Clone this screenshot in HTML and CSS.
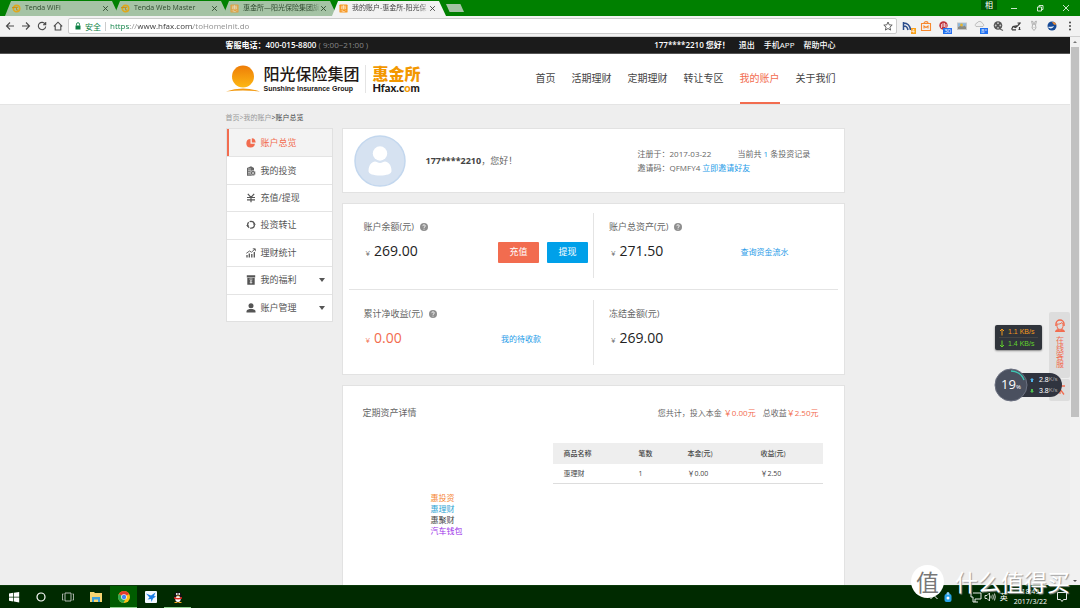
FILE: index.html
```html
<!DOCTYPE html>
<html lang="zh-CN">
<head>
<meta charset="utf-8">
<title>我的账户-惠金所-阳光保险集团</title>
<link rel="stylesheet" href="styles.css">
</head>
<body>
<svg class="defs" aria-hidden="true">
  <symbol id="tenda" viewBox="0 0 10 10"><circle cx="5" cy="5" r="3.6" fill="none" stroke="#e0a81c" stroke-width="1.8"/><path d="M0 4h4M3.2 3.6h3.6M5 3.6v3h1.6" stroke="#c98f10" stroke-width="1.1" fill="none"/></symbol>
  <symbol id="hui" viewBox="0 0 10 10"><rect x=".5" y=".5" width="9" height="9" rx="1" fill="#f7951d"/><path d="M2 2.4h6M5 1.3v4.4M2.6 3.6h4.8v1.8H2.6zM2.4 7v1.2M4 6.9v1.4h2.4M7.6 7v1" stroke="#fff3df" stroke-width=".7" fill="none"/></symbol>
  <symbol id="x" viewBox="0 0 6 6"><path d="M1 1l4 4M5 1L1 5" stroke="currentColor" stroke-width=".8" fill="none"/></symbol>
  <symbol id="help" viewBox="0 0 8 8"><circle cx="4" cy="4" r="4" fill="#8f8f8f"/><path d="M2.800 3.100c0-1.700 2.500-1.600 2.500-.1C5.300 3.900 4 3.900 4 4.900M4 5.700v.9" stroke="#fff" stroke-width=".9" fill="none"/></symbol>
</svg>

<header class="chrome">
  <div class="tabs">
    <div class="tab"><svg class="fav"><use href="#tenda"/></svg><span class="tab-title">Tenda WiFi</span><button class="tab-x" aria-label="关闭"><svg><use href="#x"/></svg></button></div>
    <div class="tab"><svg class="fav"><use href="#tenda"/></svg><span class="tab-title">Tenda Web Master</span><button class="tab-x" aria-label="关闭"><svg><use href="#x"/></svg></button></div>
    <div class="tab"><svg class="fav dim"><use href="#hui"/></svg><span class="tab-title">惠金所—阳光保险集团旗</span><button class="tab-x" aria-label="关闭"><svg><use href="#x"/></svg></button></div>
    <div class="tab active"><svg class="fav"><use href="#hui"/></svg><span class="tab-title">我的账户-惠金所-阳光保</span><button class="tab-x" aria-label="关闭"><svg><use href="#x"/></svg></button></div>
    <button class="new-tab" aria-label="新标签页"></button>
    <div class="win">
      <span class="ime">相</span>
      <button aria-label="最小化"><svg viewBox="0 0 8 8"><path d="M1 4.500h6" stroke="#fff" stroke-width=".8"/></svg></button>
      <button aria-label="还原"><svg viewBox="0 0 8 8"><path d="M1.500 3h4v4h-4zM3 3V1.500h4v4H5.500" stroke="#fff" stroke-width=".8" fill="none"/></svg></button>
      <button aria-label="关闭"><svg viewBox="0 0 8 8"><path d="M1 1l6 6M7 1L1 7" stroke="#fff" stroke-width=".8"/></svg></button>
    </div>
  </div>
  <div class="toolbar">
    <div class="nav-btns">
      <button aria-label="后退"><svg viewBox="0 0 10 10"><path d="M9 5H1.500M5 1.500L1.500 5 5 8.500" class="ln"/></svg></button>
      <button aria-label="前进"><svg viewBox="0 0 10 10"><path d="M1 5h7.500M5 1.500L8.500 5 5 8.500" class="ln"/></svg></button>
      <button aria-label="刷新"><svg viewBox="0 0 10 10"><path d="M8.300 3.300A3.700 3.700 0 1 0 8.700 5.500M8.700 1v2.700H6" class="ln"/></svg></button>
      <button aria-label="主页"><svg viewBox="0 0 10 10"><path d="M.8 5.300L5 1.200l4.200 4.100M2.200 4.500V9h5.600V4.500" class="ln"/></svg></button>
    </div>
    <div class="omnibox">
      <svg class="lock" viewBox="0 0 6 8"><path d="M.5 3.500h5V7.500h-5z" fill="#0b8043"/><path d="M1.500 3.500V2.200a1.500 1.500 0 0 1 3 0v1.300" stroke="#0b8043" fill="none" stroke-width=".9"/></svg>
      <label class="safe" for="url">安全</label>
      <input id="url" class="url" type="text" value="https://www.hfax.com/toHomeInit.do">
      <button aria-label="收藏"><svg class="star" viewBox="0 0 10 10"><path d="M5 1l1.200 2.800 3 .3-2.300 2 .7 3L5 7.500 2.400 9.100l.7-3-2.300-2 3-.3z" stroke="#555" fill="none" stroke-width=".9"/></svg></button>
    </div>
    <div class="exts">
      <button aria-label="RSS"><svg viewBox="0 0 12 12"><path d="M1.500 10V2M1.500 3c4 0 6.500 3 7 7M2 6c2 0 3.500 1.500 4 4" stroke="#2b4d8c" stroke-width="1.500" fill="none"/></svg><span class="badge amber">4</span></button>
      <button aria-label="小米"><svg viewBox="0 0 12 12"><path d="M1.500 3.500h9v7h-9zM4 3.500c0-2.500 4-2.500 4 0M4 8.500V6l2 1.500L8 6v2.500" stroke="#f7882c" stroke-width="1.100" fill="none"/></svg></button>
      <button aria-label="广告拦截"><svg viewBox="0 0 12 12"><circle cx="5.500" cy="5.500" r="4.200" fill="#c0343c"/><path d="M3.500 8V4M5 7V3M6.500 7V3M8 8V4" stroke="#fff" stroke-width=".7"/></svg><span class="badge blue">30</span></button>
      <button aria-label="图片"><svg viewBox="0 0 12 12"><path d="M1 2.500h10v7.500H1z" fill="#c6c6c6"/><path d="M2 3.300h8v3.200H2z" fill="#8cb8dd"/><path d="M2 7l3-1.500 2 1L8.500 5.500 10 7v2H2z" fill="#8a8a80"/><circle cx="5.500" cy="5" r="1.400" fill="#e9b52c"/></svg></button>
      <button aria-label="天气"><svg viewBox="0 0 12 12"><path d="M2 6.500a2 2 0 0 1 1-3.500 3 3 0 0 1 5.500.5 1.700 1.700 0 0 1 .5 3z" fill="#eee" stroke="#aaa" stroke-width=".7"/></svg><span class="badge blue">8°</span></button>
      <button aria-label="影音"><svg viewBox="0 0 12 12"><circle cx="6" cy="5.500" r="4.300" fill="#555"/><path d="M8 9l3 1.500" stroke="#666" stroke-width="1.200"/><g fill="#ccc"><circle cx="6" cy="3.200" r=".9"/><circle cx="6" cy="7.800" r=".9"/><circle cx="3.700" cy="5.500" r=".9"/><circle cx="8.300" cy="5.500" r=".9"/></g></svg></button>
      <button aria-label="链接"><svg viewBox="0 0 12 12"><path d="M1.500 9.500L3 6.500l5-1 2.500-3M7.500 3h3M2 9.800h4M8.500 9.500h2M9.500 7v2.500M3 6.500l2.500 1 2-1.500" stroke="#3c3c3c" stroke-width="1.200" fill="none"/></svg></button>
      <button aria-label="兔子"><svg viewBox="0 0 12 12"><path d="M4.500 5L3.500 1.200 5 1.500l.5 3h1l.5-3 1.500-.3L7.500 5l.5 3-2 2.500L4 8zM5.200 7v.6M6.800 7v.6" stroke="#aaa" stroke-width=".9" fill="none"/></svg></button>
      <button aria-label="浏览"><svg viewBox="0 0 12 12"><circle cx="6" cy="6" r="4.500" fill="#174a96"/><path d="M2 7c1.500-1 3 .5 6-1-1 2.500-4 3.500-6 1z" fill="#e7f0fa"/><path d="M6 2c2-.5 4 1 4.300 2.500L8 4.800z" fill="#f0892c"/></svg></button>
      <button aria-label="菜单"><svg viewBox="0 0 12 12"><g fill="#444"><circle cx="6" cy="2.500" r="1"/><circle cx="6" cy="6" r="1"/><circle cx="6" cy="9.500" r="1"/></g></svg></button>
    </div>
  </div>
</header>

<div class="viewport">
  <div class="page">
    <div class="topbar"><div class="wrap">
      <p><b>客服电话：400-015-8800</b> <span>( 9:00~21:00 )</span></p>
      <div class="top-links"><b>177****2210 您好！</b><a href="#">退出</a><a href="#">手机APP</a><a href="#">帮助中心</a></div>
    </div></div>
    <div class="masthead"><div class="wrap">
      <div class="brand">
        <svg class="sun" viewBox="0 0 34 28"><defs><linearGradient id="sg" x2="0" y2="1"><stop stop-color="#ee7d08"/><stop offset="1" stop-color="#fdb813"/></linearGradient></defs><circle cx="17" cy="11.500" r="11" fill="url(#sg)"/><path d="M0 26.500Q17 20.500 34 26.500 17 24.500 0 26.500z" fill="#f39a10"/></svg>
        <div class="brand-a"><strong>阳光保险集团</strong><span>Sunshine Insurance Group</span></div>
        <div class="brand-b"><strong>惠金所</strong><span>Hfax.c<i>o</i>m</span></div>
      </div>
      <nav class="main-nav"><a href="#">首页</a><a href="#">活期理财</a><a href="#">定期理财</a><a href="#">转让专区</a><a href="#" class="on">我的账户</a><a href="#">关于我们</a></nav>
    </div></div>
    <div class="wrap crumbs"><p>首页&gt;我的账户<b>&gt;账户总览</b></p></div>
    <div class="wrap columns">
      <nav class="side">
        <a href="#" class="on"><svg viewBox="0 0 10 10"><path d="M4.500 1a4.300 4.300 0 1 0 4.400 4.800H4.500z" fill="#f26c4f"/><path d="M5.800.3a4.200 4.200 0 0 1 3.900 4.200H5.800z" fill="#f26c4f"/></svg>账户总览</a>
        <a href="#"><svg viewBox="0 0 10 10"><path d="M1 2L5 .3 8 2v7.700H1z" fill="#666"/><path d="M2 3h3M2 4.700h3M2 6.400h2M2 8h2" stroke="#fff" stroke-width=".6"/><circle cx="7" cy="7" r="2.600" fill="#666" stroke="#fff" stroke-width=".5"/><path d="M6 5.800l1 1.200 1-1.200M7 7v1.500M6 7.400h2" stroke="#fff" stroke-width=".5" fill="none"/></svg>我的投资</a>
        <a href="#"><svg viewBox="0 0 10 10"><path d="M1.800.8L5 4.300 8.200.8M5 4.300v5M1 4.500h8M1 6.800h8" stroke="#555" stroke-width="1.200" fill="none"/></svg>充值/提现</a>
        <a href="#"><svg viewBox="0 0 10 10"><circle cx="5" cy="4.800" r="3.400" stroke="#555" stroke-width="1.300" fill="none" stroke-dasharray="6.100 1"/><path d="M.2 5h2.600L1.500 7zM7.200 4.800h2.600L8.500 2.800z" fill="#555"/></svg>投资转让</a>
        <a href="#"><svg viewBox="0 0 10 10"><path d="M1 9.500V7M3.300 9.500V5.500M5.800 9.500V6M8.300 9.500V4" stroke="#555" stroke-width="1.300"/><path d="M.3 5.300L3.500 3l2 1.200L9 1M6.800.8h2.500v2.400" stroke="#555" stroke-width=".9" fill="none"/></svg>理财统计</a>
        <a href="#"><svg viewBox="0 0 10 10"><path d="M.8.3h8.400v2.200H.8zM1.300 3.100h7.400v6.600H1.300z" fill="#555"/><path d="M3.500 4h3M3.800 5l1.200 1.200L6.200 5M5 6v2.700M3.700 7.300h2.600" stroke="#fff" stroke-width=".7" fill="none"/></svg>我的福利<i class="caret"></i></a>
        <a href="#"><svg viewBox="0 0 10 10"><circle cx="5" cy="2.800" r="2.500" fill="#555"/><path d="M.5 9.500V8C1 6.500 3 6 5 6s4 .5 4.500 2v1.500z" fill="#555"/></svg>账户管理<i class="caret"></i></a>
      </nav>
      <main class="main">
        <section class="card profile">
          <svg class="avatar" viewBox="0 0 52 52"><circle cx="26" cy="26" r="25" fill="#d6e2f1" stroke="#c3d7ee" stroke-width="1.500"/><circle cx="26" cy="18.500" r="7.200" fill="#fff"/><path d="M14.500 36c0-6 3.500-9.500 6.500-9.500 1.500 0 3 1.500 5 1.500s3.500-1.500 5-1.500c3 0 6.500 3.500 6.500 9.500 0 3-5 4.500-11.500 4.500S14.500 39 14.500 36z" fill="#fff"/></svg>
          <p class="hello"><b>177****2210</b>，您好！</p>
          <div class="meta">
            <p><span class="reg">注册于：2017-03-22</span>当前共 <em>1</em> 条投资记录</p>
            <p>邀请码：QFMFY4 <a href="#">立即邀请好友</a></p>
          </div>
        </section>
        <section class="card balances">
          <div class="cell"><h3>账户余额(元)<svg><use href="#help"/></svg></h3><div class="line"><p class="amt"><small>¥</small>269.00</p><div class="act"><button class="btn red">充值</button><button class="btn sky">提现</button></div></div></div>
          <div class="cell split"><h3>账户总资产(元)<svg><use href="#help"/></svg></h3><div class="line"><p class="amt"><small>¥</small>271.50</p><div class="act"><a href="#">查询资金流水</a></div></div></div>
          <hr>
          <div class="cell"><h3>累计净收益(元)<svg><use href="#help"/></svg></h3><div class="line"><p class="amt hot"><small>¥</small>0.00</p><div class="act"><a href="#">我的待收款</a></div></div></div>
          <div class="cell split"><h3>冻结金额(元)</h3><div class="line"><p class="amt"><small>¥</small>269.00</p></div></div>
        </section>
        <section class="card detail">
          <div class="detail-head"><h3>定期资产详情</h3><p>您共计，投入本金 <em>￥0.00元</em><span class="gain">总收益<em>￥2.50元</em></span></p></div>
          <div class="detail-body">
            <ul class="legend"><li class="l1">惠投资</li><li class="l2">惠理财</li><li class="l3">惠聚财</li><li class="l4">汽车钱包</li></ul>
            <table>
              <thead><tr><th class="c1">商品名称</th><th class="c2">笔数</th><th class="c3">本金(元)</th><th>收益(元)</th></tr></thead>
              <tbody><tr><td>惠理财</td><td>1</td><td>￥0.00</td><td>￥2.50</td></tr></tbody>
            </table>
          </div>
        </section>
      </main>
    </div>
  </div>
  <div class="scrollbar"><i class="up"></i><div class="thumb"></div><i class="down"></i></div>

  <aside class="service">
    <a href="#" class="chat"><svg viewBox="0 0 12 14"><path d="M2 7V5a4 4 0 0 1 8 0v2" stroke="#f26c4f" stroke-width="1.500" fill="none"/><path d="M3 5c2 .5 4-.5 5-1.500L9 5v2.500a3 3 0 0 1-6 0z" fill="none" stroke="#f26c4f"/><path d="M1 13c0-2 2-3 3.500-3L6 11.500 7.500 10C9 10 11 11 11 13z" fill="#f26c4f"/></svg><span>在线客服</span></a>
    <a href="#" class="top" aria-label="返回顶部"><svg viewBox="0 0 10 10"><path d="M0 1h10M1 9.500L5 4l4 5.500M5 4v5" stroke="#f26c4f" stroke-width="1.300" fill="none"/></svg></a>
  </aside>
  <div class="netmeter"><p class="upl"><svg viewBox="0 0 6 8"><path d="M3 7.500V1M1 3l2-2 2 2" stroke="currentColor" fill="none"/></svg>1.1 KB/s</p><p class="dnl"><svg viewBox="0 0 6 8"><path d="M3 .5V7M1 5l2 2 2-2" stroke="currentColor" fill="none"/></svg>1.4 KB/s</p></div>
  <div class="orb">
    <div class="ball"><svg viewBox="0 0 34 34"><circle cx="17" cy="17" r="16" fill="#4a505f" stroke="#6b7080"/><path d="M17 3a14 14 0 0 1 13 9" stroke="#3fc7b4" stroke-width="1.500" fill="none"/></svg><span>19<small>%</small></span></div>
    <div class="rates"><p><svg class="b" viewBox="0 0 4 4"><path d="M2 0l2 2H3v2H1V2H0z" fill="currentColor"/></svg>2.8<small>K/s</small></p><p><svg class="g" viewBox="0 0 4 4"><path d="M2 4l2-2H3V0H1v2H0z" fill="currentColor"/></svg>3.8<small>K/s</small></p></div>
  </div>
</div>

<footer class="taskbar">
  <button aria-label="开始"><svg viewBox="0 0 12 12"><path d="M1 2.500l4.300-.7v4H1zM6 1.700l5.200-.8v4.900H6zM1 6.500h4.300v4L1 9.800zM6 6.500h5.200v5L6 10.600z" fill="#fff"/></svg></button>
  <button aria-label="小娜"><svg viewBox="0 0 12 12"><circle cx="6" cy="6" r="4" fill="none" stroke="#fff" stroke-width="1.200"/></svg></button>
  <button aria-label="任务视图"><svg viewBox="0 0 12 12"><path d="M3 2h6v8H3zM1.500 3H.4v6h1.100M10.500 3h1.100v6h-1.100" fill="none" stroke="#ddd" stroke-width=".8"/></svg></button>
  <button class="wide" aria-label="文件资源管理器"><svg viewBox="0 0 12 12"><path d="M0 1h4l1 1h7v9H0z" fill="#f6d472"/><path d="M2 6h8v5H8V8.500H4V11H2z" fill="#3ea0dc"/></svg></button>
  <button class="run" aria-label="Chrome"><svg viewBox="0 0 12 12"><circle cx="6" cy="6" r="6" fill="#fbc116"/><path d="M6 6L.8 3A6 6 0 0 1 11.200 3z" fill="#e33b2e"/><path d="M6 6L.8 3A6 6 0 0 0 5.500 12L8 7z" fill="#2da94f"/><circle cx="6" cy="6" r="2.800" fill="#fff"/><circle cx="6" cy="6" r="2.200" fill="#4285f4"/></svg></button>
  <button aria-label="迅雷"><svg viewBox="0 0 12 12"><rect width="12" height="12" rx="1" fill="#f3f8ff"/><path d="M1 2.500l5 2L10.500 1.500 9 5l2 .5L8 7.500 6.500 11 6 8 2.500 8.500l2-2z" fill="#1c7fe6"/></svg></button>
  <button class="open" aria-label="QQ"><svg viewBox="0 0 12 12"><ellipse cx="6" cy="6" rx="4" ry="5.500" fill="#111"/><ellipse cx="6" cy="8" rx="2.700" ry="3" fill="#fff"/><path d="M2 6q4 2 8 0v1.500q-4 2-8 0z" fill="#e3261d"/><circle cx="4.800" cy="3" r=".9" fill="#fff"/><circle cx="7.200" cy="3" r=".9" fill="#fff"/><path d="M4 4.500h4L6 5.500zM2.500 11h3v1h-3zM6.500 11h3v1h-3z" fill="#f5a81c"/></svg></button>
  <div class="tray">
    <svg viewBox="0 0 12 12"><path d="M2.500 8L6 4.500 9.500 8" stroke="#fff" fill="none"/></svg>
    <svg viewBox="0 0 12 12"><rect x="2.500" y="3" width="7" height="8" rx="2" fill="#27a3e8"/><circle cx="6" cy="2.500" r="1.500" fill="#88cff5"/><circle cx="6" cy="7" r="1.500" fill="#fff"/></svg>
    <svg class="net" viewBox="0 0 12 12"><path d="M3 2h8v6H5M1 2v4h2v5h5M5 8v3" stroke="#fff" stroke-width=".9" fill="none"/></svg>
    <svg viewBox="0 0 12 12"><path d="M1 4.500h2L5.500 2v8L3 7.500H1zM7 4.500v3M8.800 3.500q1 2.500 0 5M10.500 2.500q1.500 3.500 0 7" stroke="#fff" stroke-width=".8" fill="none"/></svg>
    <span class="lang">英</span>
    <p class="clock">18:49<br>2017/3/22</p>
    <svg class="note" viewBox="0 0 12 12"><path d="M1.500 1.500h9v7H7.500L6 10.500 4.500 8.500h-3z" stroke="#fff" stroke-width=".9" fill="none"/></svg>
  </div>
</footer>
<div class="mark"><span class="seal">值</span><span>什么值得买</span></div>
</body>
</html>
```
FILE: styles.css
```css
* { box-sizing: border-box; margin: 0; padding: 0; }
body {
  display: flex; flex-direction: column; height: 100vh; overflow: hidden; position: relative;
  background: #eee; color: #666;
  font: 8px/12px "Open Sans", "Noto Sans CJK SC", sans-serif;
}
button { background: none; border: 0; font: inherit; color: inherit; display: flex; align-items: center; justify-content: center; }
a { color: inherit; text-decoration: none; }
em, i { font-style: normal; }
ul { list-style: none; }
svg { display: block; flex: none; }
.defs { position: absolute; width: 0; height: 0; }

/* browser frame */
.tabs { display: flex; height: 16px; background: #008000; padding-left: 5px; }
.tab {
  display: flex; align-items: center; width: 114px; margin-right: -5px; padding: 0 10px 0 7px;
  background: #a5c3a5; color: #2f4a2f; font-size: 7px;
  clip-path: polygon(6px 1px, calc(100% - 7px) 1px, 100% 100%, 0 100%);
}
.tab.active { background: #f2f2f2; color: #444; }
.fav { width: 9px; height: 9px; margin-right: 4px; }
.dim { opacity: .7; }
.tab-title { flex: 1; overflow: hidden; white-space: nowrap; mask-image: linear-gradient(90deg, #000 88%, transparent); }
.tab-x svg { width: 7px; height: 7px; }
.new-tab { width: 18px; height: 8px; margin: 4px 0 0 5px; background: #a5c3a5; clip-path: polygon(0 0, 80% 0, 100% 100%, 20% 100%); }
.win { display: flex; align-items: center; gap: 18px; margin-left: auto; padding-right: 10px; }
.win svg { width: 8px; height: 8px; }
.ime { align-self: flex-start; padding: 0 4px; margin-right: -5px; background: #005a00; color: #fff; font-size: 8px; line-height: 10px; }
.toolbar { display: flex; align-items: center; height: 21px; background: #f2f2f2; border-bottom: 1px solid #d0d0d0; }
.nav-btns { display: flex; gap: 6px; padding: 0 5px; }
.nav-btns svg { width: 10px; height: 10px; }
.ln { fill: none; stroke: #4a4a4a; stroke-width: 1.1; }
.omnibox { flex: 1; display: flex; align-items: center; height: 16px; padding: 0 3px 0 6px; background: #fff; border: 1px solid #ccc; border-radius: 2px; }
.lock { width: 6px; height: 8px; margin-right: 4px; }
.safe { color: #0b8043; padding-right: 4px; line-height: 9px; border-right: 1px solid #ccc; }
.url {
  flex: 1; border: 0; margin-left: 4px; font: inherit; color: transparent;
  background: linear-gradient(90deg, #0b8043 20px, #888 20px 28px, #333 28px 83px, #888 83px); background-clip: text;
}
.star { width: 10px; height: 10px; }
.exts { display: flex; gap: 6px; padding: 0 4px 0 5px; }
.exts button { position: relative; }
.exts svg { width: 12px; height: 12px; }
.badge { position: absolute; right: -2px; bottom: -2px; padding: 0 1px; color: #fff; font-size: 6px; line-height: 6px; }
.amber { background: #f9a01b; }
.blue { background: #2070f0; }

/* page */
.viewport { flex: 1; min-height: 0; display: flex; position: relative; }
.page { flex: 1; overflow: hidden; }
.wrap { max-width: 619px; margin: 0 auto; display: flex; }
.topbar { background: #1b1b1b; color: #888; border-bottom: 1px solid #555; }
.topbar .wrap { justify-content: space-between; line-height: 16px; padding-right: 9px; }
.topbar b, .top-links { color: #fff; }
.topbar b { font-weight: 600; }
.top-links { display: flex; gap: 9px; font-weight: 500; }
.masthead { background: #fff; border-bottom: 1px solid #e4e4e4; }
.masthead .wrap { justify-content: space-between; padding-right: 9px; height: 50px; }
.brand { display: flex; align-items: center; }
.sun { width: 34px; height: 28px; margin-right: 4px; }
.brand-a, .brand-b { display: flex; flex-direction: column; color: #221815; white-space: nowrap; }
.brand-a strong { font-size: 16px; line-height: 19px; font-weight: 500; }
.brand-a span { font: bold 7px/9px "Liberation Sans", sans-serif; }
.brand-b { margin-left: 5px; padding-left: 7px; border-left: 1px solid #e4e4e4; }
.brand-b strong { color: #f39800; font-size: 16px; line-height: 18px; font-weight: 900; }
.brand-b span { font: 900 11px/10px Lato, sans-serif; }
.brand-b i { color: #f39800; }
.main-nav { display: flex; gap: 16px; font-size: 10px; color: #444; }
.main-nav a { line-height: 48px; border-bottom: 2px solid transparent; }
.main-nav .on { color: #f26c4f; border-color: #f26c4f; }
.crumbs { font-size: 7px; padding: 7px 0 4px; color: #999; }
.crumbs b { color: #444; font-weight: 400; }
.columns { gap: 9px; align-items: flex-start; }
.side { flex: 0 0 107px; display: grid; grid-auto-rows: 1fr; min-height: 194px; background: #fff; border: 1px solid #e0e0e0; font-size: 9px; color: #555; }
.side a { display: flex; align-items: center; gap: 5px; padding: 0 7px 0 19px; border-top: 1px solid #e4e4e4; }
.side a:first-child { border-top: 0; }
.side .on { color: #f26c4f; background: #f3f3f3; border-left: 2px solid #f26c4f; padding-left: 17px; }
.side svg { width: 10px; height: 10px; }
.caret { margin-left: auto; border: 3px solid transparent; border-top: 4px solid #555; border-bottom: 0; }
.main { flex: 1; display: grid; gap: 10px; }
.card { background: #fff; border: 1px solid #e2e2e2; }
.card a, .meta em { color: #1e9be8; }
.card h3 { font-size: 9px; font-weight: 400; display: flex; align-items: center; gap: 6px; }
.profile { display: grid; grid-template-columns: 52px 1fr 206px; align-items: center; padding: 6px 0 5px 11px; }
.avatar { width: 52px; height: 52px; }
.hello { font-size: 9px; padding-left: 20px; }
.hello b { color: #444; }
.meta { line-height: 14px; }
.reg { display: inline-block; width: 100px; }
.balances { display: grid; grid-template-columns: 1fr 1fr; padding: 9px 6px; }
.balances hr { grid-column: 1 / -1; border: 0; border-top: 1px solid #e4e4e4; margin: 11px 0 10px; }
.cell { padding: 8px 0 14px 15px; }
.split { border-left: 1px solid #e4e4e4; }
.cell h3 svg { width: 8px; height: 8px; }
.line { display: flex; align-items: center; justify-content: space-between; height: 24px; margin-top: 7px; }
.amt { color: #222; font-size: 14px; line-height: 20px; padding-left: 2px; }
.amt small { font-size: 8px; color: #666; margin-right: 4px; }
.amt.hot, .amt.hot small { color: #f26c4f; }
.act { display: flex; gap: 8px; flex: 0 0 95px; }
.split .act { flex-basis: 100px; }
.act a { padding-left: 3px; }
.btn { width: 41px; height: 21px; color: #fff; font-size: 9px; border-radius: 1px; }
.red { background: #f26c4f; }
.sky { background: #00a0e9; }
.detail { padding: 20px 21px 80px 20px; }
.detail em { color: #f26c4f; }
.detail-head { display: flex; justify-content: space-between; line-height: 14px; padding-right: 4px; }
.gain { margin-left: 7px; }
.detail-body { display: grid; grid-template-columns: 1fr 270px; align-items: start; margin-top: 23px; }
.legend { padding: 49px 0 0 68px; line-height: 11px; }
.l1 { color: #f58634; }
.l2 { color: #2ea5d4; }
.l3 { color: #444; }
.l4 { color: #9a2ee8; }
table { border-collapse: collapse; font-size: 7px; color: #444; table-layout: fixed; width: 100%; }
th, td { text-align: left; line-height: 12px; padding: 4px 0 3px; }
th { background: #eee; padding: 5px 0 4px; font-weight: 500; }
td { border-bottom: 1px solid #ddd; }
th:first-child, td:first-child { padding-left: 11px; }
.c1 { width: 86px; }
.c2 { width: 49px; }
.c3 { width: 73px; }
.scrollbar { width: 10px; background: #f1f1f1; display: flex; flex-direction: column; padding: 0 1px; align-items: center; }
.thumb { flex: 0 1 370px; width: 100%; background: #c1c1c1; }
.up, .down { border: 2px solid transparent; margin: 3px 0; }
.up { border-bottom-color: #777; border-top: 0; margin: 4px; }
.down { border-top-color: #555; border-bottom: 0; margin-top: auto; }

/* floating widgets */
.service { position: absolute; right: 10px; top: 275px; width: 21px; color: #f26c4f; }
.service a { display: flex; flex-direction: column; align-items: center; background: #ddd; border-radius: 2px; }
.chat { gap: 3px; padding: 7px 0 10px; }
.chat svg { width: 12px; height: 14px; }
.chat span { writing-mode: vertical-rl; line-height: 12px; }
.service .top { margin-top: 1px; padding: 6px; }
.top svg { width: 10px; height: 10px; }
.netmeter { position: absolute; right: 38px; top: 288px; width: 47px; padding: 1px 4px; background: #30343b; border-radius: 2px; font: 7px/11px "Liberation Sans", sans-serif; box-shadow: 0 1px 2px #888; }
.netmeter p { display: flex; align-items: center; gap: 3px; }
.netmeter svg { width: 6px; height: 8px; }
.upl { color: #f39a1c; border-bottom: 1px solid #444; }
.dnl { color: #62d32c; }
.orb { position: absolute; right: 18px; top: 331px; width: 68px; display: flex; align-items: center; }
.ball { position: relative; z-index: 1; width: 34px; height: 34px; display: grid; place-items: center; color: #fff; }
.ball > * { grid-area: 1 / 1; }
.ball svg { width: 34px; height: 34px; }
.ball span { font-size: 13px; z-index: 1; }
.ball small { font-size: 6px; }
.rates { flex: 1; margin-left: -12px; padding: 1px 0 1px 14px; background: #30343f; border-radius: 0 12px 12px 0; color: #fff; font: 7px/11px "Liberation Sans", sans-serif; white-space: nowrap; }
.rates p { display: flex; align-items: center; }
.rates small { font-size: 6px; color: #aaa; }
.rates svg { width: 4px; height: 4px; margin-right: 5px; }
.b { color: #4fb4ee; }
.g { color: #4ec04e; }

/* desktop */
.taskbar { display: flex; height: 23px; background: #002a00; color: #fff; border-top: 1px solid #0a3a0a; }
.taskbar button { width: 27px; border-bottom: 1px solid transparent; }
.taskbar button svg { width: 12px; height: 12px; }
.taskbar .wide { width: 29px; }
.taskbar .run { background: #005c00; border-color: #8fd08f; }
.taskbar .open { border-color: #8fd08f; }
.tray { display: flex; align-items: center; gap: 2px; margin-left: auto; padding-right: 12px; }
.tray svg { width: 12px; height: 12px; }
.tray .net { margin-left: 14px; }
.lang { margin: 0 4px 0 2px; }
.clock { font-size: 7px; line-height: 10px; text-align: center; margin-right: 7px; }
.mark { position: absolute; right: 10px; bottom: 10px; display: flex; align-items: center; gap: 11px; color: #fff; font: 23px/33px "Noto Sans CJK SC", sans-serif; text-shadow: 1px 1px 1px #999; pointer-events: none; }
.seal { width: 33px; text-align: center; background: #fff; color: #777; border-radius: 50%; text-shadow: none; }
```
